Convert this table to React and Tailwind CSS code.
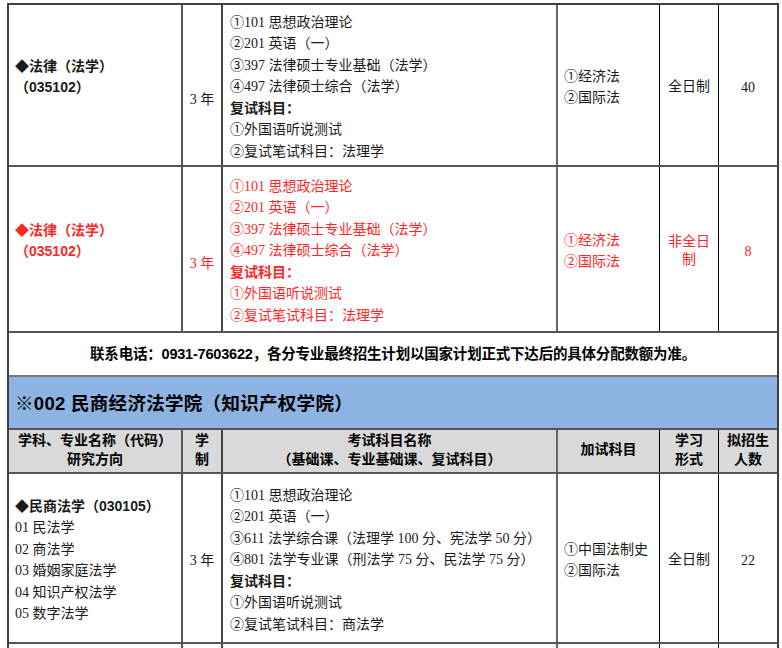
const serif = "font-['Liberation_Serif','Noto_Sans_CJK_SC',serif]";
const hei = "font-['Liberation_Sans','Noto_Sans_CJK_SC',sans-serif] font-bold";

const lawExams = [
  "①101 思想政治理论",
  "②201 英语（一）",
  "③397 法律硕士专业基础（法学）",
  "④497 法律硕士综合（法学）",
];

const civilExams = [
  "①101 思想政治理论",
  "②201 英语（一）",
  "③611 法学综合课（法理学 100 分、宪法学 50 分）",
  "④801 法学专业课（刑法学 75 分、民法学 75 分）",
];

const cols = "grid grid-cols-[174px_40px_335px_102px_59px_58px]";

function ExamCell({ exams, retest }) {
  return (
    <div className={`border-r-2 border-[#666] px-[7px] pt-[4px] flex flex-col justify-center text-[14px] leading-[21.5px] ${serif}`}>
      {exams.map((e, i) => <div key={i}>{e}</div>)}
      <div className={hei}>复试科目：</div>
      <div>①外国语听说测试</div>
      <div>②复试笔试科目：{retest}</div>
    </div>
  );
}

function MajorRow({ red, title, code, directions, exams, retest, extra, mode, count, height, shift }) {
  const color = red ? "text-[#ff2626]" : "text-[#1a1a1a]";
  return (
    <div className={`${cols} border-b-2 border-[#555] ${color}`} style={{ height }}>
      <div className={`border-r-2 border-[#555] pl-[6px] flex flex-col justify-center text-[14px] leading-[21.5px] ${shift ? "pt-[4px] pb-[20px]" : "pt-[4px]"}`}>
        <div className={hei}>◆{title}{directions ? code : ""}</div>
        {!directions && <div className={hei}>{code}</div>}
        {directions && directions.map((d, i) => <div key={i} className={serif}>{d}</div>)}
      </div>
      <div className={`border-r-2 border-[#444] flex items-center justify-center text-[14px] ${serif} ${shift ? "pt-[28px]" : "pt-[4px]"}`}>
        3 年
      </div>
      <ExamCell exams={exams} retest={retest} />
      <div className={`border-r border-black pl-[6px] pt-[4px] flex flex-col justify-center text-[14px] leading-[21.5px] ${serif}`}>
        {extra.map((x, i) => <div key={i}>{x}</div>)}
      </div>
      <div className={`border-r border-black flex items-center justify-center text-center px-[6px] pt-[4px] text-[14px] leading-[18px] ${serif}`}>
        {mode}
      </div>
      <div className={`flex items-center justify-center pt-[4px] text-[14px] ${serif}`}>{count}</div>
    </div>
  );
}

export default function App() {
  return (
    <div className="w-[782px] h-[648px] overflow-hidden bg-white">
      <div className="mt-[3px] ml-[7px] w-[772px] border-l-2 border-r-2 border-t-2 border-[#404040] text-black">
        <MajorRow
          title="法律（法学）"
          code="（035102）"
          exams={lawExams}
          retest="法理学"
          extra={["①经济法", "②国际法"]}
          mode="全日制"
          count="40"
          height={162}
          shift
        />
        <MajorRow
          red
          title="法律（法学）"
          code="（035102）"
          exams={lawExams}
          retest="法理学"
          extra={["①经济法", "②国际法"]}
          mode="非全日制"
          count="8"
          height={166}
          shift
        />
        <div className={`h-[44px] pt-[2px] border-b-2 border-[#777] flex items-center justify-center text-[14.5px] tracking-[-0.2px] ${hei}`}>
          联系电话：0931-7603622，各分专业最终招生计划以国家计划正式下达后的具体分配数额为准。
        </div>
        <div className={`h-[53px] pt-[2px] bg-[#8db3e2] border-b-2 border-[#555] flex items-center pl-[6px] text-[18.5px] tracking-[0.3px] ${hei}`}>
          ※002 民商经济法学院（知识产权学院）
        </div>
        <div className={`${cols} h-[44px] bg-[#d9d9d9] border-b-2 border-[#555] text-[14px] leading-[19px] ${hei}`}>
          <div className="border-r-2 border-[#555] pb-[3px] flex flex-col items-center justify-center">
            <div>学科、专业名称（代码）</div>
            <div>研究方向</div>
          </div>
          <div className="border-r-2 border-[#444] pb-[3px] flex flex-col items-center justify-center">
            <div>学</div>
            <div>制</div>
          </div>
          <div className="border-r-2 border-[#666] pb-[3px] flex flex-col items-center justify-center">
            <div>考试科目名称</div>
            <div>（基础课、专业基础课、复试科目）</div>
          </div>
          <div className="border-r border-black pb-[3px] flex items-center justify-center">加试科目</div>
          <div className="border-r border-black pb-[3px] flex flex-col items-center justify-center">
            <div>学习</div>
            <div>形式</div>
          </div>
          <div className="pb-[3px] flex flex-col items-center justify-center">
            <div>拟招生</div>
            <div>人数</div>
          </div>
        </div>
        <MajorRow
          title="民商法学"
          code="（030105）"
          directions={["01 民法学", "02 商法学", "03 婚姻家庭法学", "04 知识产权法学", "05 数字法学"]}
          exams={civilExams}
          retest="商法学"
          extra={["①中国法制史", "②国际法"]}
          mode="全日制"
          count="22"
          height={170}
        />
        <div className={`${cols} h-[40px]`}>
          <div className="border-r-2 border-[#555]" />
          <div className="border-r-2 border-[#444]" />
          <div className="border-r-2 border-[#666]" />
          <div className="border-r border-black" />
          <div className="border-r border-black" />
          <div />
        </div>
      </div>
    </div>
  );
}
